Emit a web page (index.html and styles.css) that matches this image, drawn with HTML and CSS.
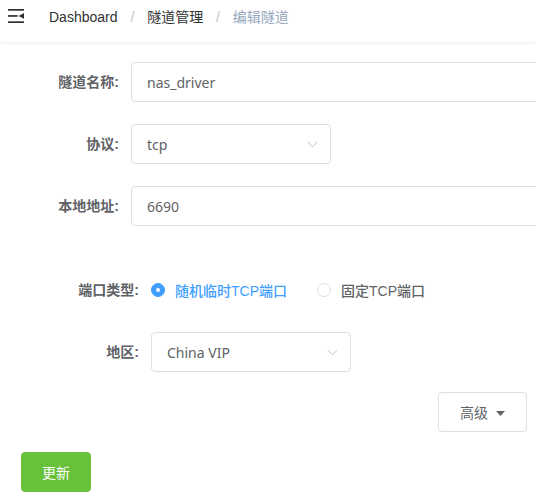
FILE: index.html
```html
<!DOCTYPE html>
<html lang="zh-CN">
<head>
    <meta charset="UTF-8">
    <meta name="viewport" content="width=device-width, initial-scale=1.0">
    <title>编辑隧道</title>
    <link rel="stylesheet" href="styles.css">
</head>
<body>

    <header class="navbar">
        <span class="hamburger">
            <svg width="16" height="14" viewBox="0 0 16 14">
                <rect x="0" y="0" width="16" height="1.7" fill="#303133"/>
                <rect x="0" y="6.1" width="9.6" height="1.7" fill="#303133"/>
                <polygon points="10.6,6.95 16,4.1 16,9.8" fill="#303133"/>
                <rect x="0" y="12.3" width="16" height="1.7" fill="#303133"/>
            </svg>
        </span>
        <nav class="breadcrumb">
            <a href="#">Dashboard</a>
            <span class="sep">/</span>
            <a href="#">隧道管理</a>
            <span class="sep">/</span>
            <span class="current">编辑隧道</span>
        </nav>
    </header>

    <main class="app-main">
        <form class="tunnel-form">
            <div class="form-item">
                <label class="form-label">隧道名称:</label>
                <input type="text" class="input wide" value="nas_driver">
            </div>

            <div class="form-item">
                <label class="form-label">协议:</label>
                <div class="select">
                    <span class="select-value">tcp</span>
                    <svg class="arrow" width="11" height="7" viewBox="0 0 11 7"><polyline points="0.5,0.8 5.5,5.6 10.5,0.8" fill="none" stroke="#c0c4cc" stroke-width="1"/></svg>
                </div>
            </div>

            <div class="form-item">
                <label class="form-label">本地地址:</label>
                <input type="text" class="input wide" value="6690">
            </div>
        </form>

        <form class="port-form">
            <div class="form-item">
                <label class="form-label">端口类型:</label>
                <div class="radio-group">
                    <label class="radio checked"><span class="radio-circle"></span>随机临时TCP端口</label>
                    <label class="radio"><span class="radio-circle"></span>固定TCP端口</label>
                </div>
            </div>

            <div class="form-item">
                <label class="form-label">地区:</label>
                <div class="select">
                    <span class="select-value">China VIP</span>
                    <svg class="arrow" width="11" height="7" viewBox="0 0 11 7"><polyline points="0.5,0.8 5.5,5.6 10.5,0.8" fill="none" stroke="#c0c4cc" stroke-width="1"/></svg>
                </div>
            </div>
        </form>

        <div class="advanced-row">
            <button type="button" class="btn">高级<svg class="caret" width="9" height="5" viewBox="0 0 9 5"><polygon points="0,0 9,0 4.5,5" fill="#606266"/></svg></button>
        </div>

        <div class="actions">
            <button type="button" class="btn btn-success">更新</button>
        </div>
    </main>

</body>
</html>
```

FILE: styles.css
```css
body {
    font-family: "Liberation Sans", Arial, "Noto Sans CJK SC", sans-serif;
    font-size: 14px;
    color: #606266;
    background-color: #fff;
    margin: 0;
    padding: 0;
    overflow: hidden;
}
.navbar {
    height: 42px;
    display: flex;
    align-items: flex-start;
    box-shadow: 0 1px 4px rgba(0, 21, 41, 0.08);
}
.hamburger {
    display: block;
    margin: 9px 0 0 8px;
    height: 14px;
}
.hamburger svg {
    display: block;
}
.breadcrumb {
    margin-left: 25px;
    line-height: 34px;
    font-size: 14px;
}
.breadcrumb a {
    color: #303133;
    text-decoration: none;
}
.breadcrumb .sep {
    margin: 0 9px;
    color: #c0c4cc;
}
.breadcrumb .current {
    color: #97a8be;
}
.app-main {
    padding: 20px 21px;
}
.form-item {
    display: flex;
    align-items: center;
    height: 40px;
    margin-bottom: 22px;
}
.form-label {
    width: 110px;
    box-sizing: border-box;
    padding-right: 12px;
    text-align: right;
    font-weight: bold;
    color: #606266;
    line-height: 40px;
    flex-shrink: 0;
}
.port-form {
    padding-top: 22px;
}
.port-form .form-label {
    width: 130px;
}
.input {
    height: 40px;
    box-sizing: border-box;
    border: 1px solid #dcdfe6;
    border-radius: 4px;
    padding: 0 15px;
    font-family: "Noto Sans", "Noto Sans CJK SC", sans-serif;
    font-size: 14px;
    color: #606266;
    outline: none;
}
.input.wide {
    width: 440px;
    flex-shrink: 0;
}
.select {
    width: 200px;
    height: 40px;
    box-sizing: border-box;
    border: 1px solid #dcdfe6;
    border-radius: 4px;
    padding: 0 12px 0 15px;
    display: flex;
    align-items: center;
    justify-content: space-between;
    font-family: "Noto Sans", "Noto Sans CJK SC", sans-serif;
    color: #606266;
    flex-shrink: 0;
}
.select .arrow {
    display: block;
}
.radio-group {
    display: flex;
    align-items: center;
}
.radio {
    display: flex;
    align-items: center;
    margin-right: 30px;
    color: #606266;
    font-weight: 500;
}
.radio-circle {
    width: 14px;
    height: 14px;
    box-sizing: border-box;
    border: 1px solid #dcdfe6;
    border-radius: 50%;
    margin-right: 10px;
    position: relative;
}
.radio.checked {
    color: #409eff;
}
.radio.checked .radio-circle {
    background-color: #409eff;
    border-color: #409eff;
}
.radio.checked .radio-circle::after {
    content: "";
    position: absolute;
    width: 4px;
    height: 4px;
    border-radius: 50%;
    background-color: #fff;
    left: 4px;
    top: 4px;
}
.advanced-row {
    display: flex;
    justify-content: flex-end;
    margin-top: -2px;
    margin-right: -12px;
}
.btn {
    height: 40px;
    box-sizing: border-box;
    border: 1px solid #dcdfe6;
    border-radius: 4px;
    background-color: #fff;
    color: #606266;
    font-family: "Liberation Sans", Arial, "Noto Sans CJK SC", sans-serif;
    font-size: 14px;
    padding: 0 20px;
}
.advanced-row .btn {
    width: 89px;
}
.caret {
    margin-left: 8px;
    vertical-align: 2px;
}
.actions {
    margin-top: 20px;
}
.btn-success {
    width: 70px;
    background-color: #67c23a;
    border-color: #67c23a;
    color: #fff;
}
```
